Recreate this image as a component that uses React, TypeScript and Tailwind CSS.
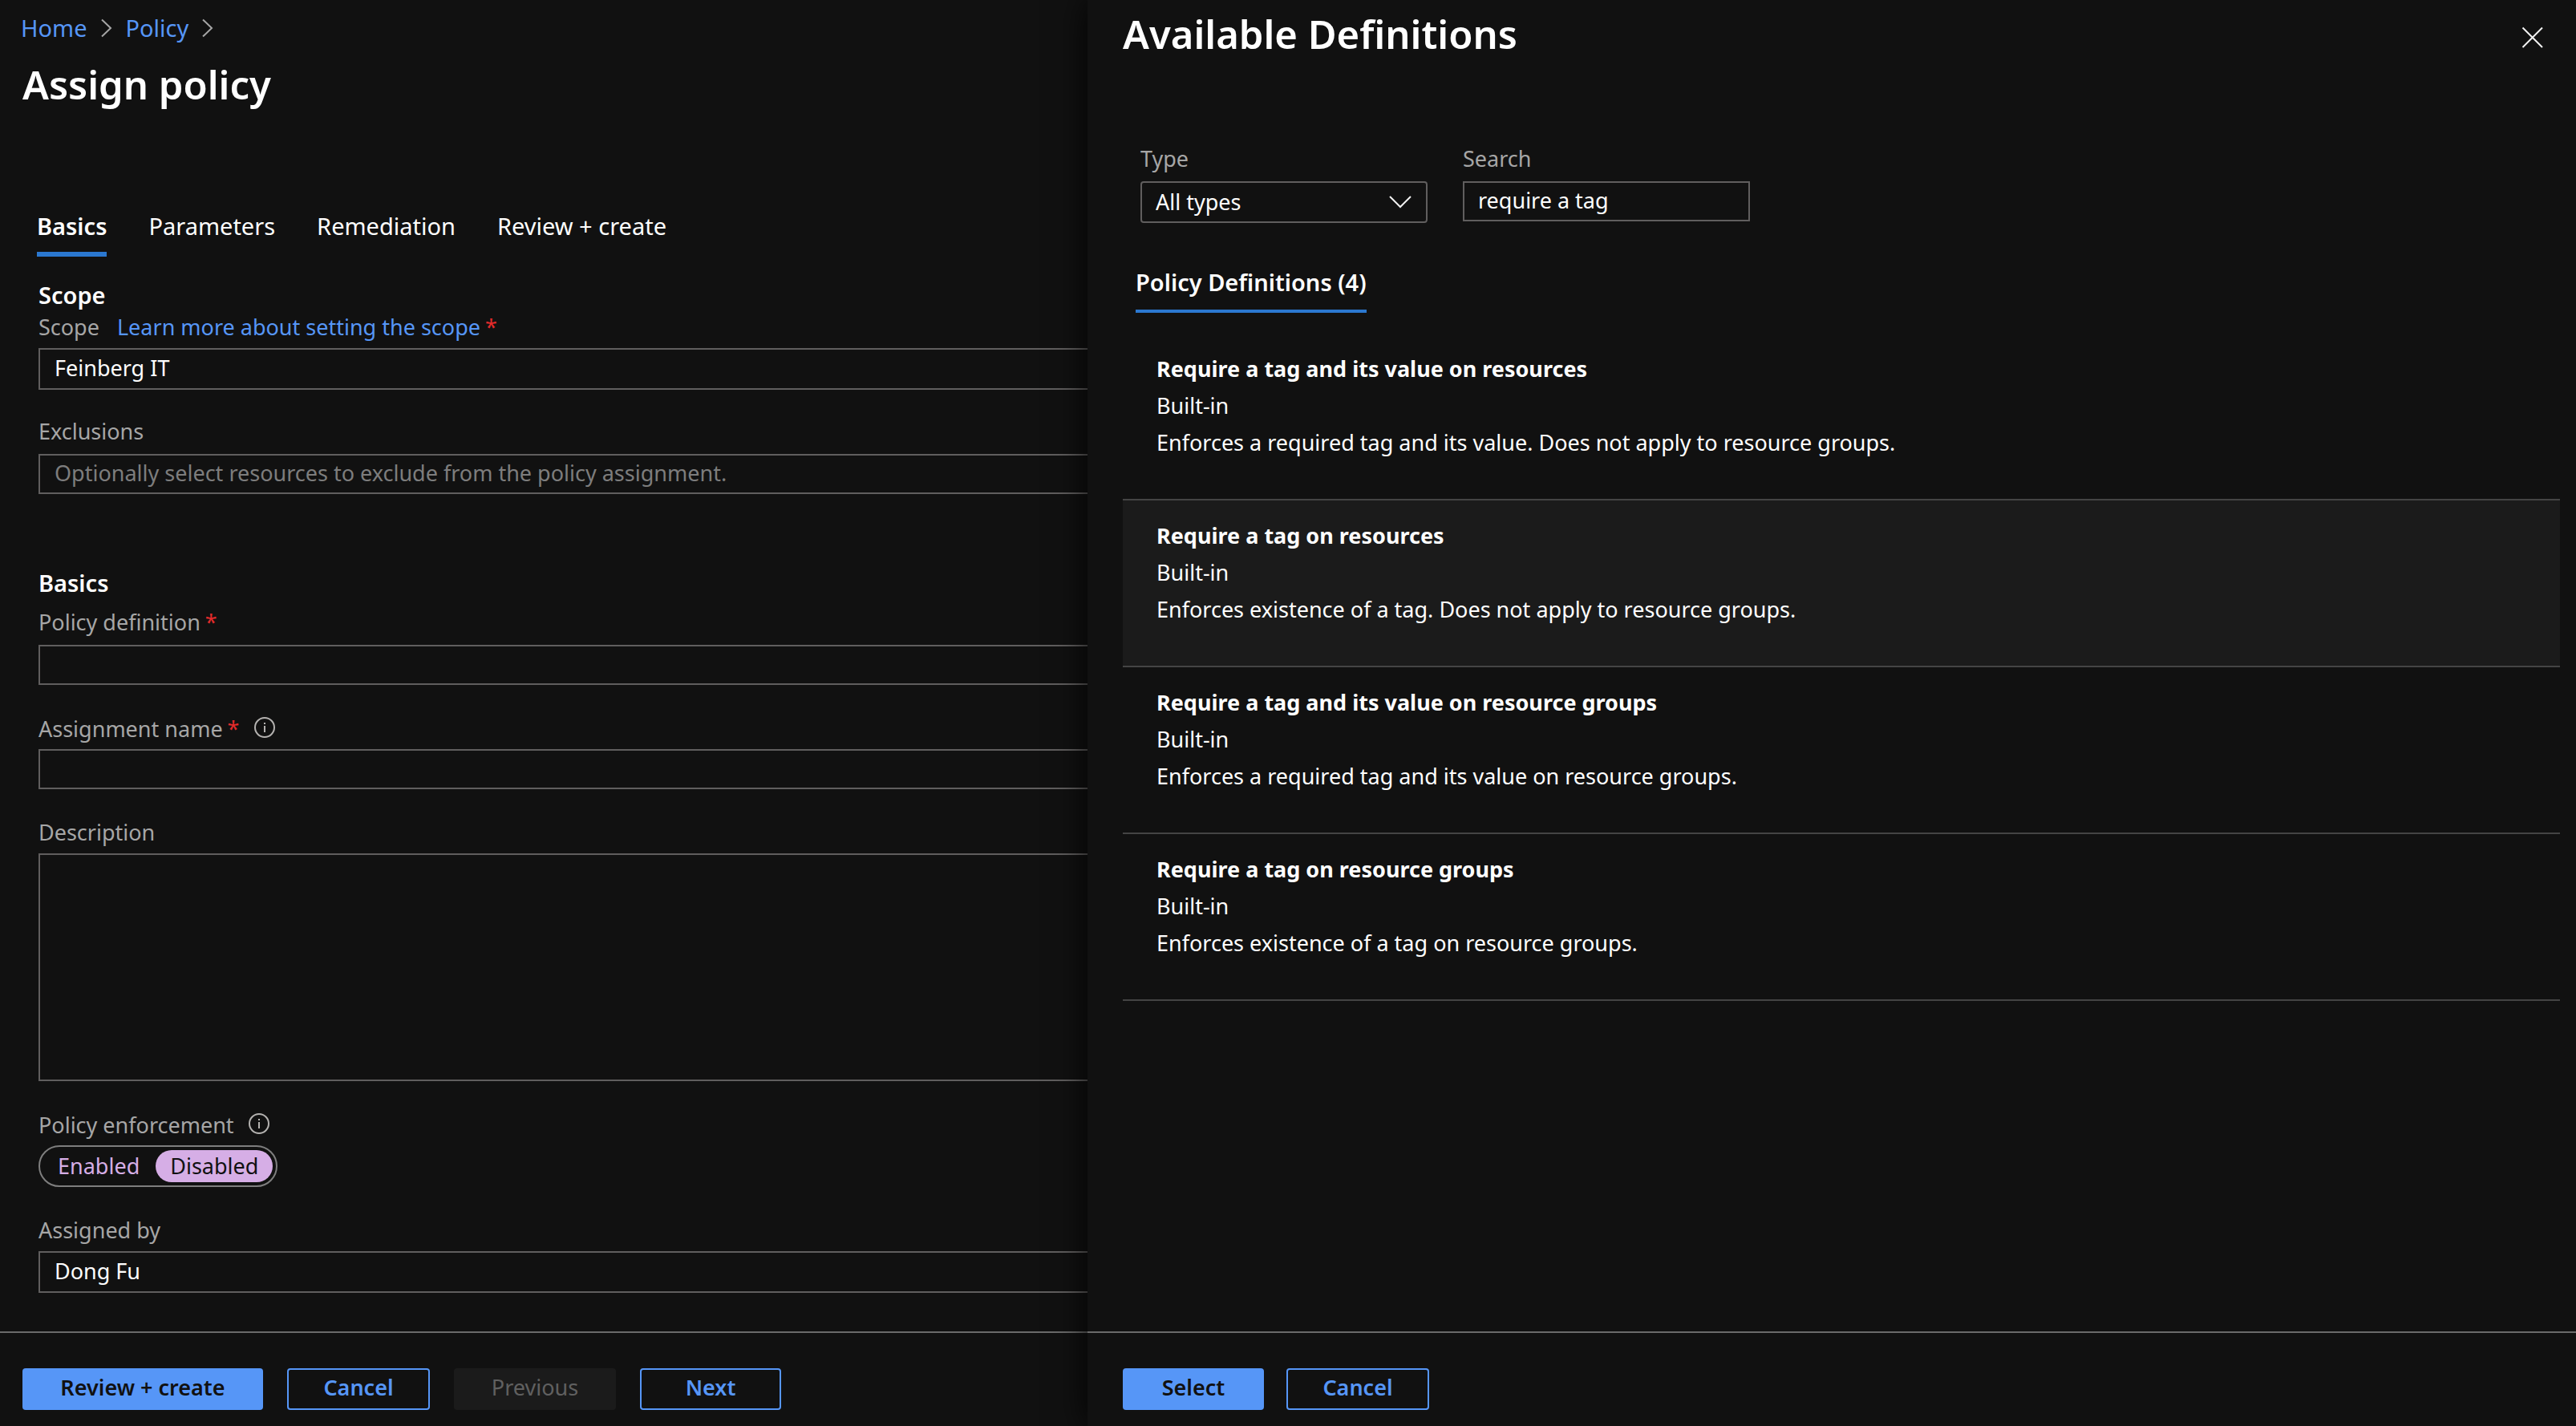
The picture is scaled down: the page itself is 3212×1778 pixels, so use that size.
import { useState, type ReactNode } from "react";

const definitions = [
  {
    title: "Require a tag and its value on resources",
    description: "Enforces a required tag and its value. Does not apply to resource groups.",
  },
  {
    title: "Require a tag on resources",
    description: "Enforces existence of a tag. Does not apply to resource groups.",
  },
  {
    title: "Require a tag and its value on resource groups",
    description: "Enforces a required tag and its value on resource groups.",
  },
  {
    title: "Require a tag on resource groups",
    description: "Enforces existence of a tag on resource groups.",
  },
];

const fieldBase =
  "block w-full border-2 border-r-0 border-[#605e5e] bg-transparent px-[18px] pb-1 text-white outline-none placeholder:text-[#7d7d7d]";

function Crumb() {
  return (
    <svg className="h-6 w-4" viewBox="0 0 16 24" fill="none" stroke="#a6a6a6" strokeWidth="2" aria-hidden="true">
      <path d="M2 1.5 13 12 2 22.5" />
    </svg>
  );
}

function InfoIcon() {
  return (
    <svg className="mb-1 ml-4.5 size-6.5" viewBox="0 0 26 26" fill="none" stroke="#b4b2b0" strokeWidth="2" aria-hidden="true">
      <circle cx="13" cy="13" r="12" />
      <path d="M13 11v8M13 7v2" />
    </svg>
  );
}

function Label({
  htmlFor,
  children,
  required,
  info,
}: {
  htmlFor?: string;
  children: ReactNode;
  required?: boolean;
  info?: boolean;
}) {
  return (
    <div className="flex items-center text-[#a6a6a6]">
      <label htmlFor={htmlFor}>{children}</label>
      {required && <span className="ml-1.5 text-[#e22b2b]">*</span>}
      {info && <InfoIcon />}
    </div>
  );
}

function PrimaryButton({ className, children }: { className: string; children: ReactNode }) {
  return (
    <button type="button" className={`h-13 rounded bg-[#5696f7] pb-1 font-semibold text-[#111] ${className}`}>
      {children}
    </button>
  );
}

function OutlineButton({ className, children }: { className: string; children: ReactNode }) {
  return (
    <button type="button" className={`h-13 rounded border-2 border-[#5696f7] pb-1 font-semibold text-[#5696f7] ${className}`}>
      {children}
    </button>
  );
}

export default function App() {
  const [enforcement, setEnforcement] = useState("Disabled");
  const [selected, setSelected] = useState(1);
  const [search, setSearch] = useState("require a tag");

  return (
    <div className="grid min-h-screen grid-cols-[1356fr_1856fr] bg-[#111] font-['Noto_Sans','Open_Sans',sans-serif] text-[27px] leading-9 text-white">
      <main className="flex min-w-0 flex-col overflow-hidden pt-[17px]">
        <nav aria-label="Breadcrumb" className="flex items-center gap-4 pl-[26px] text-[29px] text-[#5696f7]">
          <a href="#home">Home</a>
          <Crumb />
          <a href="#policy">Policy</a>
          <Crumb />
        </nav>
        <h1 className="mt-5 pl-7 text-[49px] leading-16 font-semibold">Assign policy</h1>

        <div role="tablist" className="mt-[127px] flex gap-[52px] pl-[46px] text-[29px]">
          <button type="button" role="tab" aria-selected="true" className="border-b-6 border-[#2b78d0] pb-3.5 font-semibold">
            Basics
          </button>
          <button type="button" role="tab" aria-selected="false" className="border-b-6 border-transparent pb-3.5">
            Parameters
          </button>
          <button type="button" role="tab" aria-selected="false" className="border-b-6 border-transparent pb-3.5">
            Remediation
          </button>
          <button type="button" role="tab" aria-selected="false" className="border-b-6 border-transparent pb-3.5">
            Review + create
          </button>
        </div>

        <form className="pl-12">
          <h2 className="mt-[30px] text-[29px] font-semibold">Scope</h2>
          <div className="mt-1 flex text-[#a6a6a6]">
            <label htmlFor="scope">Scope</label>
            <a href="#scope-help" className="ml-[22px] text-[#5696f7]">
              Learn more about setting the scope
            </a>
            <span className="ml-1.5 text-[#e22b2b]">*</span>
          </div>
          <input id="scope" defaultValue="Feinberg IT" className={`mt-2 h-13 ${fieldBase}`} />

          <div className="mt-[34px]">
            <Label htmlFor="exclusions">Exclusions</Label>
          </div>
          <input
            id="exclusions"
            placeholder="Optionally select resources to exclude from the policy assignment."
            className={`mt-2.5 h-12.5 ${fieldBase}`}
          />

          <h2 className="mt-[93px] text-[29px] font-semibold">Basics</h2>
          <div className="mt-[13px]">
            <Label htmlFor="definition" required>
              Policy definition
            </Label>
          </div>
          <input id="definition" className={`mt-2.5 h-12.5 ${fieldBase}`} />

          <div className="mt-[37px]">
            <Label htmlFor="assignment" required info>
              Assignment name
            </Label>
          </div>
          <input id="assignment" className={`mt-[7px] h-12.5 ${fieldBase}`} />

          <div className="mt-9">
            <Label htmlFor="description">Description</Label>
          </div>
          <textarea id="description" className={`mt-2 h-71 resize-none ${fieldBase}`} />

          <fieldset className="mt-[37px]">
            <legend className="flex items-center text-[#a6a6a6]">
              Policy enforcement
              <InfoIcon />
            </legend>
            <div className="mt-[7px] inline-flex h-13 items-center gap-0.5 rounded-full border-2 border-[#7e7e7e] p-1">
              {["Enabled", "Disabled"].map((option) => (
                <label
                  key={option}
                  className="flex h-10 cursor-pointer items-center rounded-full px-[18px] text-[#d6aee6] has-checked:bg-[#d6aee6] has-checked:text-[#111]"
                >
                  <input
                    type="radio"
                    name="enforcement"
                    value={option}
                    checked={enforcement === option}
                    onChange={() => setEnforcement(option)}
                    className="sr-only"
                  />
                  {option}
                </label>
              ))}
            </div>
          </fieldset>

          <div className="mt-9">
            <Label htmlFor="assigned-by">Assigned by</Label>
          </div>
          <input id="assigned-by" defaultValue="Dong Fu" className={`mt-2 h-13 ${fieldBase}`} />
        </form>

        <footer className="mt-auto flex gap-[30px] border-t-2 border-[#6a6a6a] pt-11 pb-5 pl-7">
          <PrimaryButton className="w-[300px]">Review + create</PrimaryButton>
          <OutlineButton className="w-[178px]">Cancel</OutlineButton>
          <button type="button" disabled className="h-13 w-[202px] rounded bg-[#1b1b1b] pb-1 text-[#606060]">
            Previous
          </button>
          <OutlineButton className="w-44">Next</OutlineButton>
        </footer>
      </main>

      <aside className="relative flex min-w-0 flex-col bg-[#111] shadow-[0_0_40px_rgba(0,0,0,0.9)]">
        <header className="flex items-start justify-between pt-2.5 pr-10 pl-11">
          <h2 className="text-[49px] leading-16 font-semibold">Available Definitions</h2>
          <button type="button" aria-label="Close" className="mt-[23px]">
            <svg className="size-7" viewBox="0 0 28 28" fill="none" stroke="#f2f2f2" strokeWidth="2" aria-hidden="true">
              <path d="M1.5 1.5 26 26M26 1.5 1.5 26" />
            </svg>
          </button>
        </header>

        <div className="mt-[106px] flex items-start gap-11 pl-[66px]">
          <div>
            <label htmlFor="type" className="block text-[#a6a6a6]">
              Type
            </label>
            <div className="relative mt-2.5">
              <select
                id="type"
                className="block h-13 w-[358px] appearance-none rounded border-2 border-[#605e5e] bg-[#111] px-[17px] text-white outline-none"
              >
                <option>All types</option>
              </select>
              <svg
                className="pointer-events-none absolute top-4 right-5 h-5 w-7"
                viewBox="0 0 28 20"
                fill="none"
                stroke="#f2f2f2"
                strokeWidth="2"
                aria-hidden="true"
              >
                <path d="M1 3 14 16 27 3" />
              </svg>
            </div>
          </div>
          <div>
            <label htmlFor="search" className="block text-[#a6a6a6]">
              Search
            </label>
            <input
              id="search"
              value={search}
              onChange={(event) => setSearch(event.target.value)}
              className="mt-2.5 block h-12.5 w-[358px] border-2 border-[#605e5e] bg-transparent px-[17px] pb-1 text-white outline-none"
            />
          </div>
        </div>

        <div role="tablist" className="mt-14 flex pl-[60px] text-[29px]">
          <button type="button" role="tab" aria-selected="true" className="border-b-4 border-[#2b78d0] pb-4 font-semibold">
            Policy Definitions (4)
          </button>
        </div>

        <ul className="mt-[26px] pr-5 pl-11">
          {definitions.map((definition, index) => (
            <li key={definition.title} className="border-b-2 border-[#444]">
              <button
                type="button"
                aria-pressed={selected === index}
                onClick={() => setSelected(index)}
                className={`block w-full px-[42px] pt-[21px] pb-[47px] text-left leading-[46px] ${selected === index ? "bg-[#1b1b1b]" : ""}`}
              >
                <span className="block font-bold">{definition.title}</span>
                <span className="block">Built-in</span>
                <span className="block">{definition.description}</span>
              </button>
            </li>
          ))}
        </ul>

        <footer className="mt-auto flex gap-7 border-t-2 border-[#6a6a6a] pt-11 pb-5 pl-11">
          <PrimaryButton className="w-44">Select</PrimaryButton>
          <OutlineButton className="w-[178px]">Cancel</OutlineButton>
        </footer>
      </aside>
    </div>
  );
}
